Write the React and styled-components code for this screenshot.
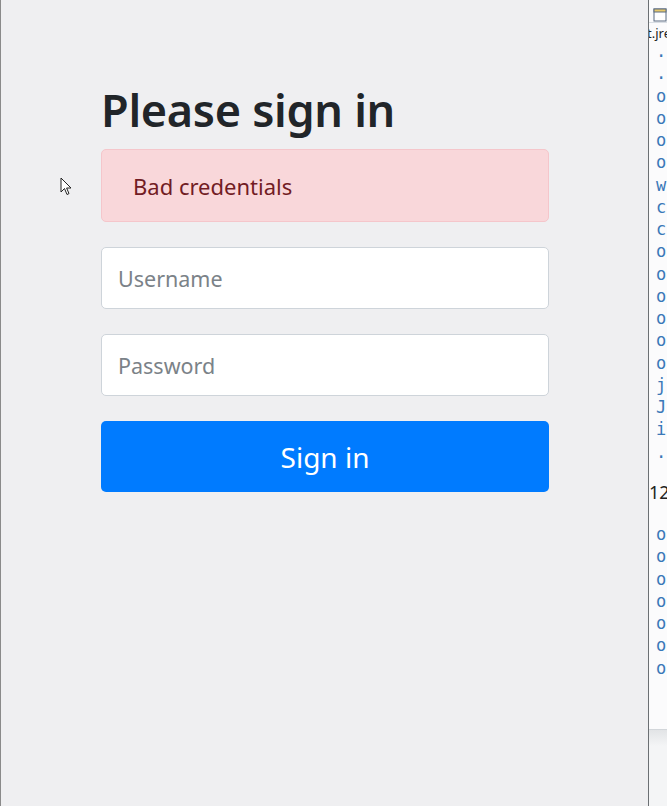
import React from "react";
import styled, { createGlobalStyle } from "styled-components";

const Global = createGlobalStyle`
  html, body { margin: 0; padding: 0; height: 100%; overflow: hidden; }
  body { font-family: "Noto Sans", "Open Sans", sans-serif; }
  #root { height: 100%; }
`;

const Screen = styled.div`
  display: flex;
  height: 806px;
  width: 667px;
  overflow: hidden;
`;

const Browser = styled.main`
  position: relative;
  width: 649px;
  flex: none;
  background: #efeff1;
  border-left: 1px solid #8a8a8a;
  border-right: 1px solid #6b6f73;
  box-sizing: border-box;
  padding: 80px 0 0 100px;
`;

const Form = styled.form`
  width: 448px;
  display: flex;
  flex-direction: column;
`;

const Heading = styled.h2`
  margin: 0 0 9px;
  font-size: 45px;
  font-weight: 600;
  line-height: 60px;
  color: #212529;
  letter-spacing: -0.3px;
`;

const Alert = styled.div`
  height: 73px;
  box-sizing: border-box;
  display: flex;
  align-items: center;
  padding: 0 31px;
  background: #f9d7da;
  border: 1px solid #f5c6cb;
  border-radius: 5px;
  color: #721c24;
  font-size: 22px;
  margin-bottom: 25px;
`;

const Input = styled.input`
  height: 62px;
  box-sizing: border-box;
  border: 1px solid #ced4da;
  border-radius: 5px;
  background: #fff;
  padding: 0 16px;
  font-family: inherit;
  font-size: 21.5px;
  color: #495057;
  margin-bottom: ${(p) => p.$gap}px;
  outline: none;
  &::placeholder { color: #7b8288; }
`;

const Button = styled.button`
  height: 71px;
  border: none;
  border-radius: 5px;
  background: #007bff;
  color: #fff;
  font-family: inherit;
  font-size: 28px;
  cursor: pointer;
`;

const Cursor = styled.svg`
  position: absolute;
  left: 59px;
  top: 177px;
`;

const Ide = styled.aside`
  flex: 1;
  background: #fbfbfc;
  display: flex;
  flex-direction: column;
  overflow: hidden;
  font-family: "DejaVu Sans Mono", monospace;
  font-size: 17px;
  color: #3a78b8;
  white-space: nowrap;
`;

const IdeTab = styled.div`
  height: 22px;
  display: flex;
  align-items: flex-end;
  padding-left: 4px;
  border-bottom: 1px solid #d8dde3;
`;

const IdeTitle = styled.div`
  font-family: "Noto Sans", sans-serif;
  font-size: 13px;
  color: #222;
  height: 17px;
  line-height: 20px;
  margin-left: -2px;
`;

const Line = styled.div`
  height: 22.25px;
  line-height: 22.25px;
  padding-left: ${(p) => (p.$dark ? 0 : 7)}px;
  color: ${(p) => (p.$dark ? "#222" : "#3a78b8")};
  font-family: ${(p) => (p.$dark ? '"Noto Sans", sans-serif' : "inherit")};
  font-size: ${(p) => (p.$dark ? 18 : 17)}px;
  margin-top: ${(p) => p.$mt || 0}px;
`;

const IdeFooter = styled.div`
  margin-top: auto;
  height: 76px;
  border-top: 1px solid #d2d6da;
  background: linear-gradient(#e2e4e6, #f4f5f6 16px, #f4f5f6);
`;

const topLines = [".", ".", "o", "o", "o", "o", "w", "c", "c", "o", "o", "o", "o", "o", "o", "j", "J", "i", "."];
const bottomLines = ["o", "o", "o", "o", "o", "o", "o"];

export default function App() {
  return (
    <>
      <Global />
      <Screen>
        <Browser>
          <Form onSubmit={(e) => e.preventDefault()}>
            <Heading>Please sign in</Heading>
            <Alert>Bad credentials</Alert>
            <Input $gap={25} placeholder="Username" />
            <Input $gap={25} type="password" placeholder="Password" />
            <Button type="submit">Sign in</Button>
          </Form>
          <Cursor width="12" height="19" viewBox="0 0 12 19">
            <path d="M1 1 L1 15 L4.5 11.5 L7 17.5 L9 16.6 L6.6 11 L11 11 Z" fill="#fff" stroke="#222" strokeWidth="1" strokeLinejoin="round" />
          </Cursor>
        </Browser>
        <Ide>
          <IdeTab>
            <svg width="14" height="16" viewBox="0 0 14 16">
              <rect x="1" y="3" width="12" height="12" fill="#fff" stroke="#5a6b80" />
              <rect x="1" y="3" width="12" height="3" fill="#e8c96a" stroke="#5a6b80" />
            </svg>
          </IdeTab>
          <IdeTitle>t.jre</IdeTitle>
          {topLines.map((t, i) => (
            <Line key={i}>{t}</Line>
          ))}
          <Line $dark $mt={18}>12</Line>
          <Line $mt={20}>o</Line>
          {bottomLines.slice(1).map((t, i) => (
            <Line key={"b" + i}>{t}</Line>
          ))}
          <IdeFooter />
        </Ide>
      </Screen>
    </>
  );
}
